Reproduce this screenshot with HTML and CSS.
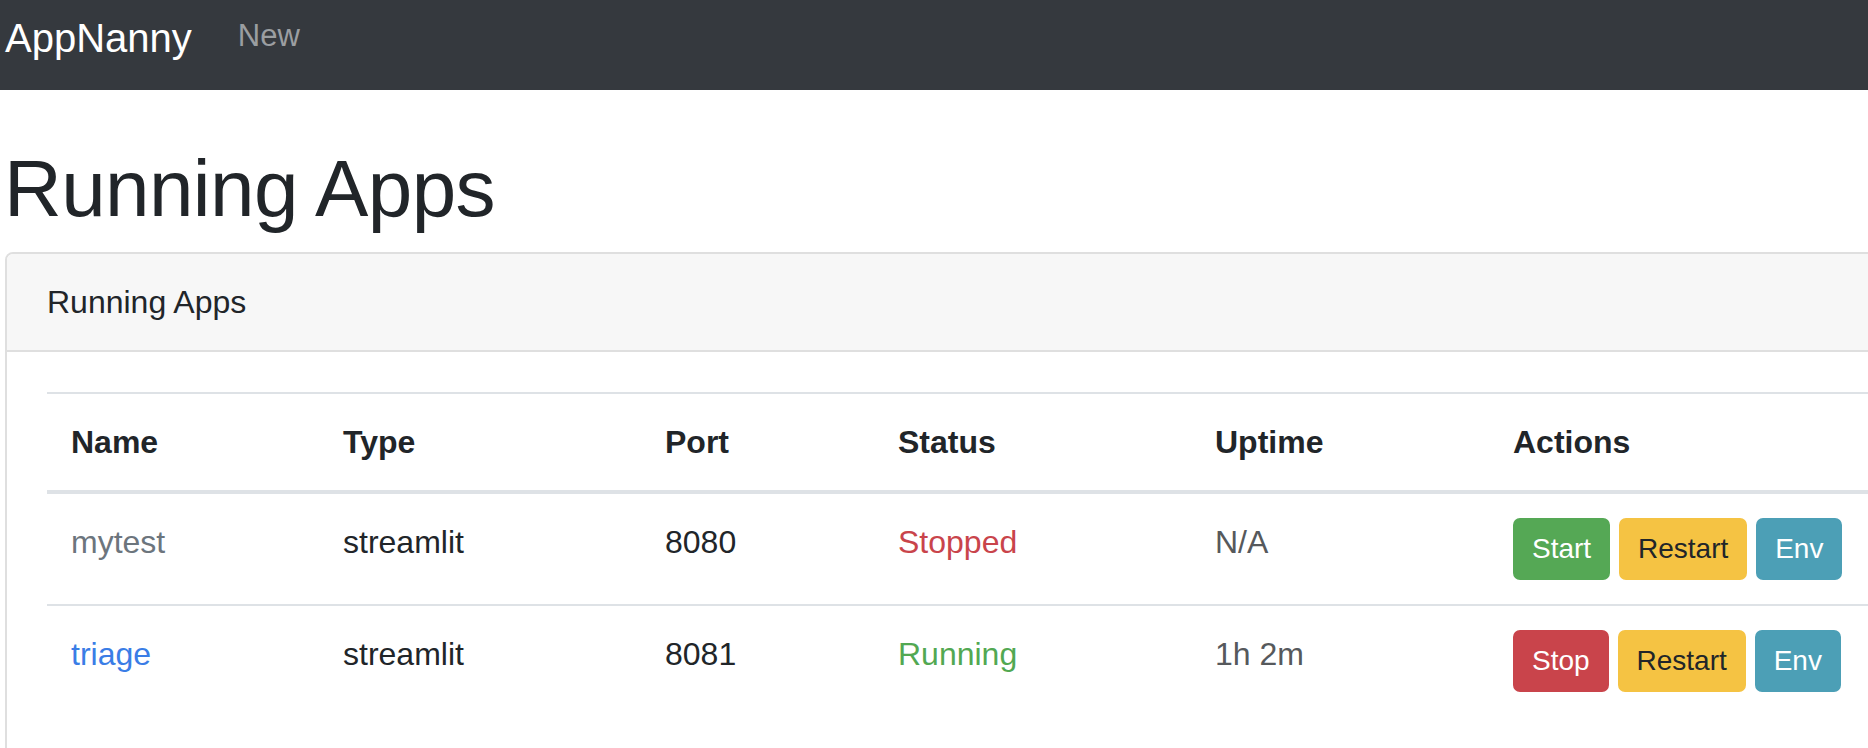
FILE: index.html
```html
<!DOCTYPE html>
<html lang="en">
<head>
<meta charset="utf-8">
<title>AppNanny</title>
<link rel="stylesheet" href="styles.css">
</head>
<body>
<nav class="navbar">
  <a class="brand" href="#">AppNanny</a>
  <a class="nav-link" href="#">New</a>
</nav>
<main class="main">
  <h1 class="title">Running Apps</h1>
  <section class="card">
    <div class="card-header">Running Apps</div>
    <div class="card-body">
      <table class="table">
        <colgroup>
          <col class="c-name">
          <col class="c-type">
          <col class="c-port">
          <col class="c-status">
          <col class="c-uptime">
          <col class="c-actions">
        </colgroup>
        <thead>
          <tr>
            <th>Name</th>
            <th>Type</th>
            <th>Port</th>
            <th>Status</th>
            <th>Uptime</th>
            <th>Actions</th>
          </tr>
        </thead>
        <tbody>
          <tr>
            <td class="muted-name">mytest</td>
            <td>streamlit</td>
            <td>8080</td>
            <td class="stopped">Stopped</td>
            <td class="uptime">N/A</td>
            <td class="actions"><button class="btn btn-success">Start</button> <button class="btn btn-warning">Restart</button> <button class="btn btn-info">Env</button></td>
          </tr>
          <tr>
            <td><a class="app-link" href="#">triage</a></td>
            <td>streamlit</td>
            <td>8081</td>
            <td class="running">Running</td>
            <td class="uptime">1h 2m</td>
            <td class="actions"><button class="btn btn-danger">Stop</button> <button class="btn btn-warning">Restart</button> <button class="btn btn-info">Env</button></td>
          </tr>
        </tbody>
      </table>
    </div>
  </section>
</main>
</body>
</html>
```

FILE: styles.css
```css
html, body {
  margin: 0;
  padding: 0;
  overflow: hidden;
  background: #ffffff;
}

body {
  font-family: "Liberation Sans", Arial, Helvetica, sans-serif;
  color: #212529;
  font-size: 32px;
  line-height: 48px;
}

.navbar {
  display: flex;
  align-items: flex-start;
  height: 90px;
  background: #35393e;
  padding-left: 5px;
  box-sizing: border-box;
}

.brand {
  color: #ffffff;
  text-decoration: none;
  font-size: 40px;
  line-height: 60px;
  padding-top: 8px;
}

.nav-link {
  color: #9b9ea1;
  text-decoration: none;
  font-size: 31px;
  line-height: 44px;
  padding-top: 14px;
  margin-left: 46px;
}

.main {
  padding: 0;
}

.title {
  font-size: 80px;
  font-weight: 500;
  line-height: 96px;
  letter-spacing: -0.6px;
  margin: 51px 0 15px 0;
  padding-left: 4px;
  color: #212529;
}

.card {
  margin-left: 5px;
  width: 1960px;
  border: 2px solid #dfdfdf;
  border-radius: 8px;
  overflow: hidden;
}

.card-header {
  background: #f7f7f7;
  padding: 24px 40px;
  font-size: 32px;
  line-height: 48px;
  border-bottom: 2px solid #dfdfdf;
}

.card-body {
  padding: 40px;
}

.table {
  width: 100%;
  border-collapse: collapse;
  table-layout: fixed;
}

.c-name { width: 272px; }
.c-type { width: 322px; }
.c-port { width: 233px; }
.c-status { width: 317px; }
.c-uptime { width: 298px; }

.table th {
  text-align: left;
  font-weight: 700;
  padding: 24px;
  vertical-align: bottom;
  border-top: 2px solid #dee2e6;
  border-bottom: 4px solid #dee2e6;
}

.table td {
  padding: 24px;
  vertical-align: top;
  border-top: 2px solid #dee2e6;
  white-space: nowrap;
}

.table tbody tr:first-child td {
  border-top: none;
}

.muted-name {
  color: #6c757d;
}

.app-link {
  color: #3a7de6;
  text-decoration: none;
}

.stopped {
  color: #c9444b;
}

.running {
  color: #52a852;
}

.uptime {
  color: #56595c;
}

.actions {
  padding-left: 23px;
}

.btn {
  display: inline-block;
  font-family: inherit;
  font-size: 28px;
  line-height: 42px;
  padding: 8px 17px;
  border: 2px solid transparent;
  border-radius: 7px;
  margin: 0;
  cursor: pointer;
}

.btn-success {
  background: #55a855;
  border-color: #55a855;
  color: #ffffff;
}

.btn-warning {
  background: #f5c343;
  border-color: #f5c343;
  color: #212529;
}

.btn-info {
  background: #4c9fb6;
  border-color: #4c9fb6;
  color: #ffffff;
}

.btn-danger {
  background: #c9444b;
  border-color: #c9444b;
  color: #ffffff;
}
```
